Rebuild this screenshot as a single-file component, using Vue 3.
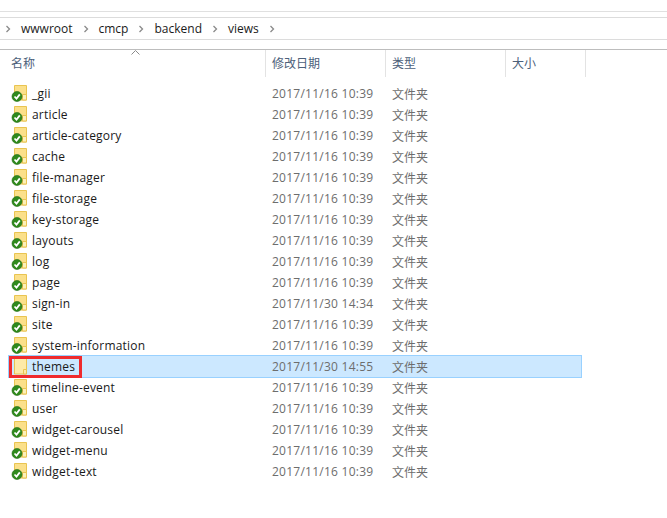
<template>
  <div class="explorer">
    <div class="top-strip"></div>
    <div class="crumbs">
      <svg class="chev" viewBox="0 0 6 8"><path d="M1.5 1 L4.5 4 L1.5 7" /></svg>
      <template v-for="part in crumbs" :key="part">
        <span class="crumb">{{ part }}</span>
        <svg class="chev" viewBox="0 0 6 8"><path d="M1.5 1 L4.5 4 L1.5 7" /></svg>
      </template>
    </div>
    <div class="spacer"></div>
    <div class="header">
      <svg class="sort" viewBox="0 0 9 5"><path d="M0.5 4.5 L4.5 0.5 L8.5 4.5" /></svg>
      <div class="col c-name">名称</div>
      <div class="col c-date">修改日期</div>
      <div class="col c-type">类型</div>
      <div class="col c-size">大小</div>
    </div>
    <div class="rows">
      <div v-for="row in rows" :key="row.name" class="row" :class="{ selected: row.selected }">
        <div class="name-cell">
          <svg v-if="row.selected" class="folder" viewBox="0 0 17 17">
            <path d="M3.5 0.5 H15.5 V16 H3.5 Z" fill="#fdeaa8" stroke="#e9c451" />
            <path d="M12.5 11.5 H15.5 V16 H12.5 Z" fill="#fdeaa8" stroke="#e9c451" />
          </svg>
          <svg v-else class="folder" viewBox="0 0 17 17">
            <path d="M3.5 0.5 H15.5 V15 H3.5 Z" fill="#fbe08a" stroke="#e9c451" />
            <path d="M11.5 9.5 H15.5 V15 H11.5 Z" fill="#fdf0b8" stroke="#e9c451" />
            <circle cx="6" cy="11.5" r="5" fill="#2f8a1c" stroke="#1f6a10" stroke-width="0.6" />
            <path d="M3.5 11.5 L5.5 13.6 L8.8 9.4" fill="none" stroke="#fff" stroke-width="1.8" />
          </svg>
          <span class="fname">{{ row.name }}</span>
          <span v-if="row.selected" class="marker"></span>
        </div>
        <div class="date">{{ row.date }}</div>
        <div class="type">文件夹</div>
      </div>
    </div>
  </div>
</template>

<script setup>
const crumbs = ['wwwroot', 'cmcp', 'backend', 'views'];

const d1 = '2017/11/16 10:39';

const rows = [
  { name: '_gii', date: d1 },
  { name: 'article', date: d1 },
  { name: 'article-category', date: d1 },
  { name: 'cache', date: d1 },
  { name: 'file-manager', date: d1 },
  { name: 'file-storage', date: d1 },
  { name: 'key-storage', date: d1 },
  { name: 'layouts', date: d1 },
  { name: 'log', date: d1 },
  { name: 'page', date: d1 },
  { name: 'sign-in', date: '2017/11/30 14:34' },
  { name: 'site', date: d1 },
  { name: 'system-information', date: d1 },
  { name: 'themes', date: '2017/11/30 14:55', selected: true },
  { name: 'timeline-event', date: d1 },
  { name: 'user', date: d1 },
  { name: 'widget-carousel', date: d1 },
  { name: 'widget-menu', date: d1 },
  { name: 'widget-text', date: d1 }
];
</script>

<style>
html, body {
  margin: 0;
  background: #fff;
}
</style>

<style scoped>
.explorer {
  width: 667px;
  height: 518px;
  overflow: hidden;
  background: #fff;
  font-family: "Open Sans", "Noto Sans CJK SC", sans-serif;
  font-size: 12px;
}

.top-strip {
  box-sizing: border-box;
  margin-top: 11px;
  height: 6px;
  border-top: 1px solid #e0e0e0;
}

.crumbs {
  box-sizing: border-box;
  height: 23px;
  display: flex;
  align-items: center;
  border-top: 1px solid #dcdcdc;
  border-bottom: 1px solid #dcdcdc;
  padding-left: 5px;
  gap: 10px;
  color: #1a1a1a;
}

.chev {
  width: 6px;
  height: 8px;
  fill: none;
  stroke: #8a8a8a;
  stroke-width: 1.3;
}

.spacer {
  height: 9px;
  border-bottom: 1px solid #bdbdbd;
}

.header {
  position: relative;
  height: 27px;
  display: flex;
  color: #4c607a;
  font-size: 12px;
}

.sort {
  position: absolute;
  left: 131px;
  top: 0;
  width: 9px;
  height: 5px;
  fill: none;
  stroke: #8a8a8a;
}

.col {
  box-sizing: border-box;
  height: 27px;
  line-height: 28px;
  padding-left: 6px;
  border-right: 1px solid #e3e3e3;
}

.c-name {
  width: 266px;
  padding-left: 11px;
}

.c-date {
  width: 120px;
}

.c-type {
  width: 120px;
}

.c-size {
  width: 80px;
}

.rows {
  padding-top: 6px;
}

.row {
  height: 21px;
  display: flex;
  align-items: center;
  width: 574px;
  margin-left: 8px;
  box-sizing: border-box;
  color: #6d6d6d;
}

.row.selected {
  background: #cce8ff;
  border: 1px solid #99d1ff;
  height: 23px;
  margin: -1px 0 -1px 8px;
}

.name-cell {
  position: relative;
  width: 264px;
  display: flex;
  align-items: center;
  padding-left: 3px;
  box-sizing: border-box;
}

.selected .name-cell {
  width: 263px;
  padding-left: 2px;
}

.folder {
  width: 17px;
  height: 17px;
  flex: none;
}

.fname {
  margin-left: 4px;
  color: #1a1a1a;
  letter-spacing: 0.2px;
}

.marker {
  position: absolute;
  left: 0;
  top: -2px;
  width: 73px;
  height: 22px;
  box-sizing: border-box;
  border: 3px solid #ef2b2d;
}

.date {
  width: 120px;
  flex: none;
  letter-spacing: 0.25px;
}

.type {
  flex: none;
}
</style>
